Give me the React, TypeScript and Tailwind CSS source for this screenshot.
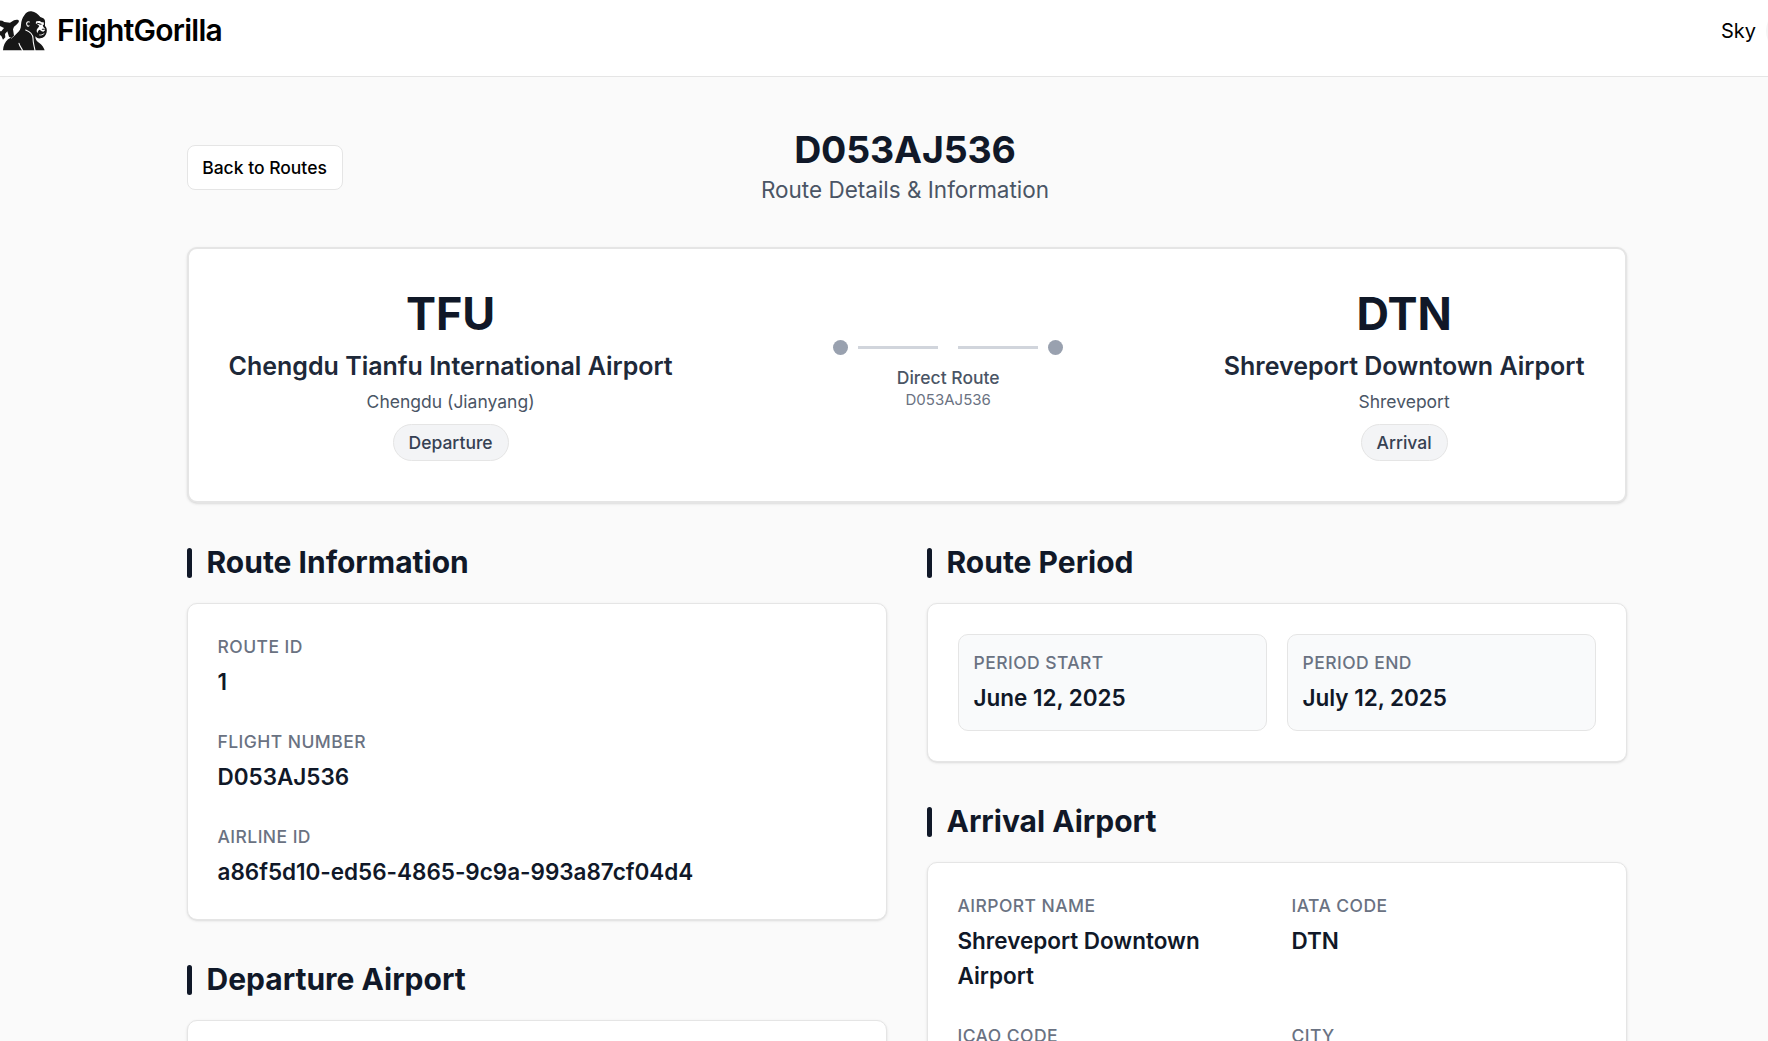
import React from "react";

function GorillaLogo() {
  return (
    <svg width="50" height="46" viewBox="0 0 150 138" className="block shrink-0" aria-label="FlightGorilla logo">
      <path
        fill="#171717"
        d="M9 127C10 113 15 102 24 94C33 88 44 86 51 76C59 69 63 62 63 51C64 38 67 30 73 22C78 13 86 9 94 10C106 11 114 19 121 27L130 31C135 34 136 40 135 47L135 54C139 57 142 64 140 73C138 83 131 90 121 91C114 92 109 89 106 85C105 94 111 101 118 105C126 111 131 118 134 127Z"
      />
      <path
        fill="#171717"
        stroke="#fff"
        strokeWidth="3"
        paintOrder="stroke"
        d="M-2 37L7 38L13 42L30 44L42 37C49 34 56 35 57 39C56 45 50 50 42 56L39 64L42 83L34 90L27 86L22 70L15 78L16 88L9 95L4 84L-2 80V70L4 70L12 60L-2 53Z"
      />
      <g fill="none" stroke="#fff" strokeLinecap="round" strokeLinejoin="round">
        <path strokeWidth="3.200" d="M88 42C81 39 78 47 81 51C82 55 86 56 87 53" />
        <path strokeWidth="3.200" d="M77 66C92 72 99 79 99 91C99 106 103 115 105 128" />
        <path strokeWidth="3.200" d="M57 106C59 115 65 120 68 128" />
        <path strokeWidth="2.600" d="M119 81C124 82 128 80 132 77" />
      </g>
      <path
        fill="#fff"
        d="M109 40L119 39L125 43L131 43L132 50L128 50L130 57L135 62L135 67L130 71L125 70L119 65C115 67 113 71 112 76C109 70 109 64 114 60L118 54L112 49L107 46Z"
      />
      <path fill="none" stroke="#171717" strokeWidth="3.200" strokeLinecap="round" d="M112 46L123 49M127 64L133 64" />
    </svg>
  );
}

function Header() {
  return (
    <header className="flex h-[77px] items-start justify-between border-b border-[#e5e5e5] bg-white">
      <div className="flex h-[62px] items-center gap-[7px]">
        <GorillaLogo />
        <span className="-mt-[3px] text-[30px] font-semibold leading-10 tracking-[-0.75px] text-black">FlightGorilla</span>
      </div>
      <div className="-mr-[48px] flex h-[62px] items-center gap-[10px]">
        <span className="text-[20px] leading-[30px] text-black">Sky</span>
        <div className="size-[50px] rounded-full bg-[#f5f5f5]" />
      </div>
    </header>
  );
}

function Endpoint({ code, name, city, kind }: { code: string; name: string; city: string; kind: string }) {
  return (
    <div className="flex flex-col items-center text-center">
      <div className="text-[45px] font-bold leading-[50px] text-gray-900">{code}</div>
      <div className="mt-2.5 text-[25px] font-semibold leading-[35px] text-gray-800">{name}</div>
      <div className="mt-[5px] text-[17.5px] leading-[25px] text-gray-600">{city}</div>
      <div className="mt-2.5 rounded-full border border-[#e5e5e5] bg-gray-100 px-[15px] py-[5px] text-[17.5px] font-medium leading-[25px] text-gray-700">
        {kind}
      </div>
    </div>
  );
}

function RouteSummary() {
  return (
    <section className="flex items-center justify-between rounded-[10px] border-2 border-[#e5e5e5] bg-white p-10 shadow-sm">
      <Endpoint code="TFU" name="Chengdu Tianfu International Airport" city="Chengdu (Jianyang)" kind="Departure" />
      <div className="flex flex-col items-center">
        <div className="flex items-center gap-2.5">
          <span className="size-[15px] rounded-full bg-gray-400" />
          <span className="mr-2.5 h-[3px] w-20 bg-gray-300" />
          <span className="h-[3px] w-20 bg-gray-300" />
          <span className="size-[15px] rounded-full bg-gray-400" />
        </div>
        <div className="mt-2.5 text-[17.5px] font-medium leading-[25px] text-gray-600">Direct Route</div>
        <div className="text-[15px] leading-5 text-gray-500">D053AJ536</div>
      </div>
      <Endpoint code="DTN" name="Shreveport Downtown Airport" city="Shreveport" kind="Arrival" />
    </section>
  );
}

function Section({ title, children }: { title: string; children: React.ReactNode }) {
  return (
    <section>
      <div className="mb-5 flex h-10 items-center gap-[15px]">
        <span className="h-[30px] w-[5px] rounded-full bg-gray-900" />
        <h2 className="pb-0.5 text-[30px] font-bold leading-10 text-gray-900">{title}</h2>
      </div>
      <div className="rounded-[10px] border border-[#e5e5e5] bg-white p-[30px] shadow-sm">{children}</div>
    </section>
  );
}

function Field({ label, value }: { label: string; value: string }) {
  return (
    <div>
      <div className="text-[17.5px] font-medium uppercase leading-[25px] tracking-[0.4375px] text-gray-500">{label}</div>
      <div className="mt-[5px] text-[22.5px] font-semibold leading-[35px] tracking-[-0.02px] text-gray-900">{value}</div>
    </div>
  );
}

function PeriodBox({ label, value }: { label: string; value: string }) {
  return (
    <div className="rounded-[10px] border border-[#e5e5e5] bg-gray-50 p-[15px]">
      <Field label={label} value={value} />
    </div>
  );
}

export default function App() {
  return (
    <div className="h-[1041px] overflow-hidden bg-[#fafafa] font-['Inter',sans-serif]">
      <Header />
      <main className="ml-[186.5px] w-[1440px] pt-[50px]">
        <div className="mb-10 flex items-center justify-between">
          <button className="h-[45px] w-[156px] whitespace-nowrap rounded-[8px] border border-[#e5e5e5] bg-white text-[17.5px] font-medium leading-[25px] text-black">
            Back to Routes
          </button>
          <div className="text-center">
            <h1 className="text-[37.5px] font-bold leading-[45px] tracking-[-0.15px] text-gray-900">D053AJ536</h1>
            <p className="text-[22.5px] leading-[35px] text-gray-600">Route Details &amp; Information</p>
          </div>
          <div className="w-[159px]" />
        </div>
        <RouteSummary />
        <div className="mt-10 grid grid-cols-2 gap-10">
          <div className="space-y-10">
            <Section title="Route Information">
              <div className="space-y-[30px]">
                <Field label="Route ID" value="1" />
                <Field label="Flight Number" value="D053AJ536" />
                <Field label="Airline ID" value="a86f5d10-ed56-4865-9c9a-993a87cf04d4" />
              </div>
            </Section>
            <Section title="Departure Airport">
              <div className="grid grid-cols-2 gap-[30px]">
                <Field label="Airport Name" value="Chengdu Tianfu International Airport" />
                <Field label="IATA Code" value="TFU" />
              </div>
            </Section>
          </div>
          <div className="space-y-10">
            <Section title="Route Period">
              <div className="grid grid-cols-2 gap-5">
                <PeriodBox label="Period Start" value="June 12, 2025" />
                <PeriodBox label="Period End" value="July 12, 2025" />
              </div>
            </Section>
            <Section title="Arrival Airport">
              <div className="grid grid-cols-2 gap-[30px]">
                <Field label="Airport Name" value="Shreveport Downtown Airport" />
                <Field label="IATA Code" value="DTN" />
                <Field label="ICAO Code" value="KDTN" />
                <Field label="City" value="Shreveport" />
              </div>
            </Section>
          </div>
        </div>
      </main>
    </div>
  );
}
